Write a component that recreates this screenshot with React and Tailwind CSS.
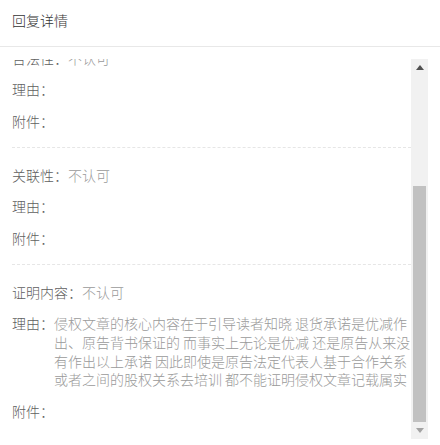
import React from "react";

const font = { fontFamily: '"Noto Sans CJK SC", "Noto Sans", sans-serif' };

function Row({ label, value, children }) {
  return (
    <div className="flex text-[14px] leading-[18.67px]">
      <span className="shrink-0 text-[#5f5f5f]">{label}</span>
      {value ? <span className="text-[#9a9a9a]">{value}</span> : null}
      {children}
    </div>
  );
}

function Section({ title, value, reasonLines, last }) {
  return (
    <div
      className={
        "flex flex-col gap-[13px] pt-[18px] pb-[16px] " +
        (last ? "" : "border-b border-dashed border-[#e6e6e6]")
      }
    >
      <Row label={title + "："} value={value} />
      <Row label="理由：">
        {reasonLines ? (
          <div className="flex flex-col text-[#9a9a9a]">
            {reasonLines.map((l, i) => (
              <span key={i} className="block whitespace-nowrap">
                {l}
              </span>
            ))}
          </div>
        ) : null}
      </Row>
      <Row label="附件：" />
    </div>
  );
}

export default function App() {
  return (
    <div className="w-[440px] h-[445px] bg-white overflow-hidden font-light" style={font}>
      <div className="h-[47px] border-b border-[#e8e8e8] flex items-center px-[12px] pb-[5px]">
        <span className="text-[14px] text-[#333333]">回复详情</span>
      </div>
      <div className="mt-[12px] ml-[12px] w-[416px] h-[380px] flex">
        <div className="flex-1 overflow-hidden">
          <div className="-mt-[28.33px]">
            <Section title="合法性" value="不认可" />
            <Section title="关联性" value="不认可" />
            <Section
              title="证明内容"
              value="不认可"
              last
              reasonLines={[
                "侵权文章的核心内容在于引导读者知晓 退货承诺是优减作",
                "出、原告背书保证的 而事实上无论是优减 还是原告从来没",
                "有作出以上承诺 因此即使是原告法定代表人基于合作关系",
                "或者之间的股权关系去培训 都不能证明侵权文章记载属实",
              ]}
            />
          </div>
        </div>
        <div className="w-[17px] h-full bg-[#f1f1f1] flex flex-col">
          <div className="h-[17px] flex items-center justify-center">
            <svg width="8" height="5" viewBox="0 0 8 5">
              <polygon points="4,0 8,5 0,5" fill="#505050" />
            </svg>
          </div>
          <div className="h-[110px]" />
          <div className="flex-1 px-[2px]">
            <div className="h-full bg-[#c1c1c1]" />
          </div>
          <div className="h-[17px] flex items-center justify-center">
            <svg width="8" height="5" viewBox="0 0 8 5">
              <polygon points="0,0 8,0 4,5" fill="#a3a3a3" />
            </svg>
          </div>
        </div>
      </div>
    </div>
  );
}
